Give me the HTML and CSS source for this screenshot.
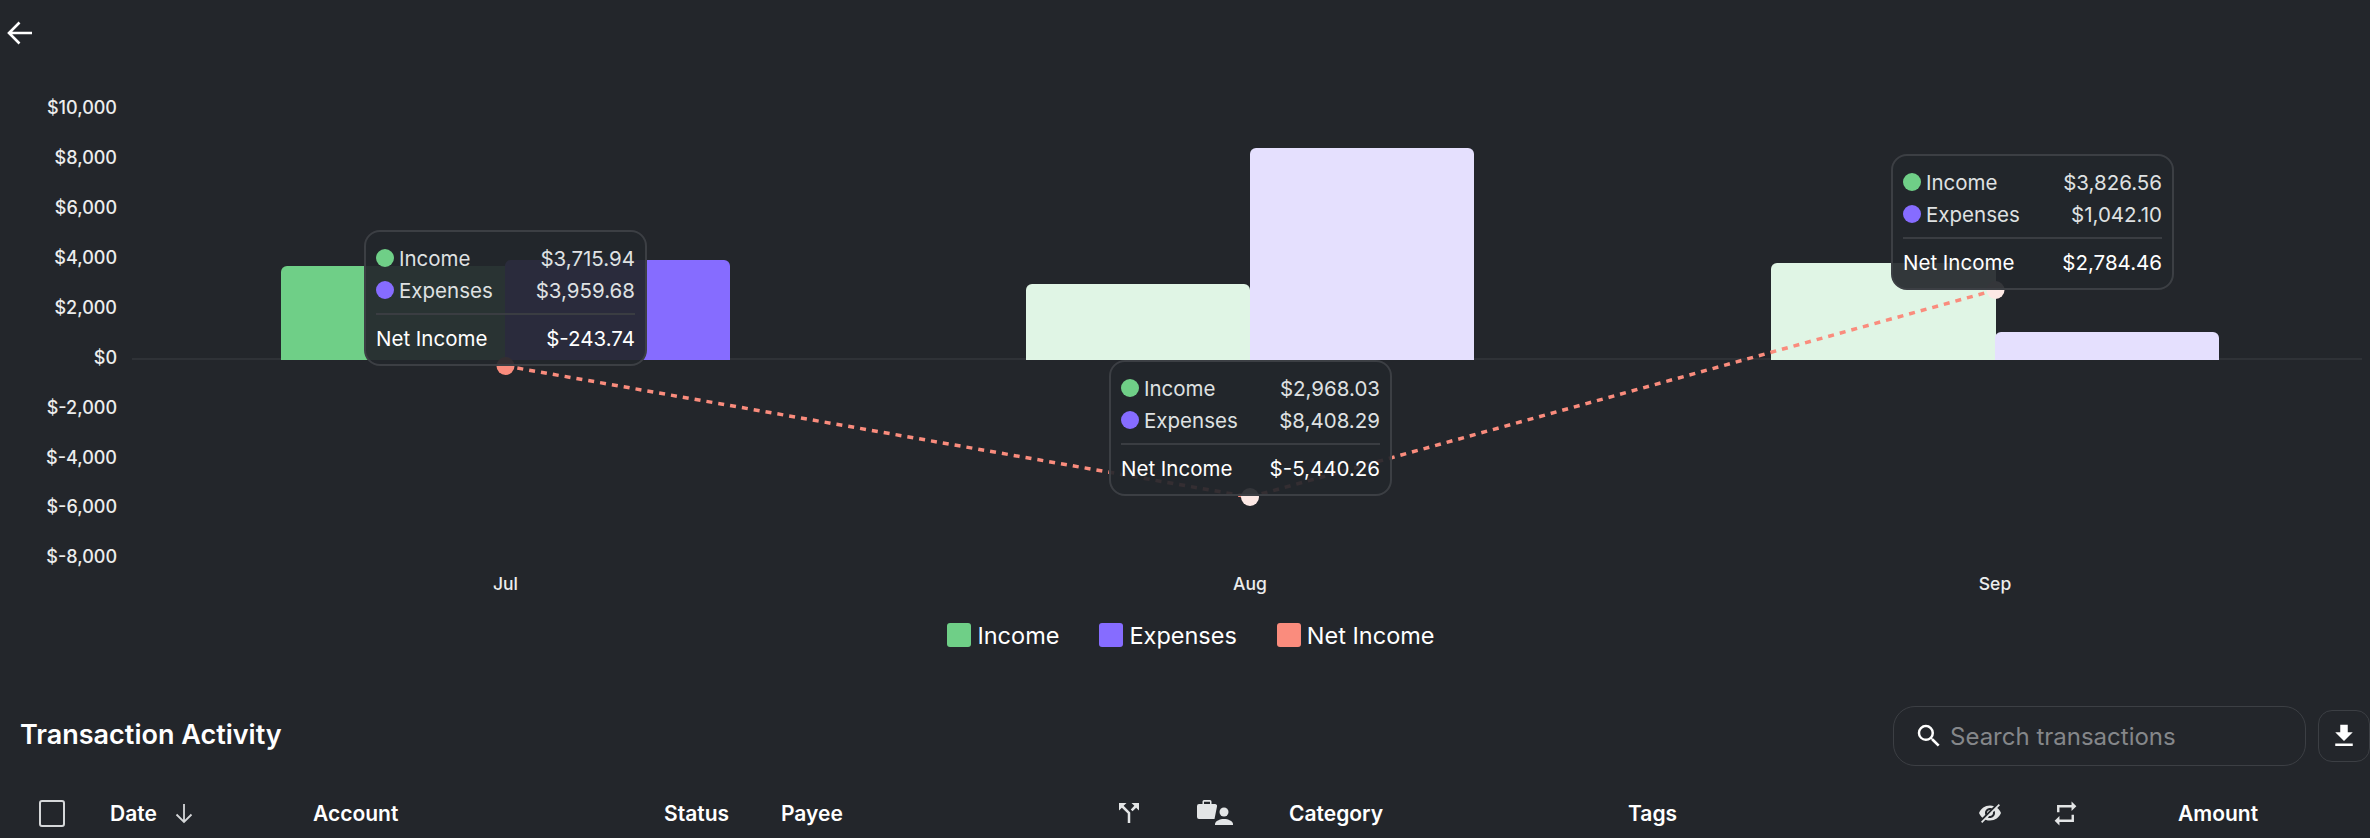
FILE: index.html
```html
<!DOCTYPE html>
<html lang="en">
<head>
    <meta charset="UTF-8">
    <title>Cash Flow</title>
    <link rel="stylesheet" href="styles.css">
</head>
<body>
<div class="topbar">
    <button class="back-btn">
        <svg width="26" height="26" viewBox="0 0 26 26"><path d="M25 13H2.500M12.500 2.500 2 13l10.500 10.500" fill="none" stroke="#fff" stroke-width="2.600"/></svg>
    </button>
</div>

<div class="chart">
    <svg class="chart-svg" width="2370" height="540" viewBox="0 66 2370 540">
        <g class="axis-y">
            <text x="117" y="114">$10,000</text>
            <text x="117" y="164">$8,000</text>
            <text x="117" y="214">$6,000</text>
            <text x="117" y="264">$4,000</text>
            <text x="117" y="314">$2,000</text>
            <text x="117" y="364">$0</text>
            <text x="117" y="414">$-2,000</text>
            <text x="117" y="464">$-4,000</text>
            <text x="117" y="513">$-6,000</text>
            <text x="117" y="563">$-8,000</text>
        </g>
        <line x1="132" y1="359" x2="2362" y2="359" stroke="#34373c" stroke-width="1.500"/>

        <path class="bar-income" d="M281 360V272a6 6 0 0 1 6-6H505V360Z"/>
        <path class="bar-expenses" d="M505 360V266a6 6 0 0 1 6-6H724a6 6 0 0 1 6 6V360Z"/>

        <path class="bar-income-dim" d="M1026 360V290a6 6 0 0 1 6-6H1244a6 6 0 0 1 6 6V360Z"/>
        <path class="bar-expenses-dim" d="M1250 360V154a6 6 0 0 1 6-6H1468a6 6 0 0 1 6 6V360Z"/>

        <path class="bar-income-dim" d="M1771 360V269a6 6 0 0 1 6-6H1990a6 6 0 0 1 6 6V360Z"/>
        <path class="bar-expenses-dim" d="M1995 360V338a6 6 0 0 1 6-6H2213a6 6 0 0 1 6 6V360Z"/>

        <polyline class="net-line" points="505.500,366 1250,497 1995.500,290"/>
        <circle cx="505.500" cy="366" r="9" fill="#fa8c7d"/>
        <circle cx="1250" cy="497" r="9" fill="#fde9e5"/>
        <circle cx="1995.500" cy="290" r="9" fill="#fde9e5"/>

        <g class="axis-x">
            <text x="505.500" y="590">Jul</text>
            <text x="1250" y="590">Aug</text>
            <text x="1995" y="590">Sep</text>
        </g>
    </svg>

    <div class="tooltip tip-jul">
        <div class="tip-row"><span class="tip-name"><i class="dot income"></i>Income</span><span>$3,715.94</span></div>
        <div class="tip-row"><span class="tip-name"><i class="dot expenses"></i>Expenses</span><span>$3,959.68</span></div>
        <div class="tip-line"></div>
        <div class="tip-row tip-total"><span>Net Income</span><span>$-243.74</span></div>
    </div>
    <div class="tooltip tip-aug">
        <div class="tip-row"><span class="tip-name"><i class="dot income"></i>Income</span><span>$2,968.03</span></div>
        <div class="tip-row"><span class="tip-name"><i class="dot expenses"></i>Expenses</span><span>$8,408.29</span></div>
        <div class="tip-line"></div>
        <div class="tip-row tip-total"><span>Net Income</span><span>$-5,440.26</span></div>
    </div>
    <div class="tooltip tip-sep">
        <div class="tip-row"><span class="tip-name"><i class="dot income"></i>Income</span><span>$3,826.56</span></div>
        <div class="tip-row"><span class="tip-name"><i class="dot expenses"></i>Expenses</span><span>$1,042.10</span></div>
        <div class="tip-line"></div>
        <div class="tip-row tip-total"><span>Net Income</span><span>$2,784.46</span></div>
    </div>
</div>

<div class="legend">
    <div class="legend-item"><i class="swatch income"></i>Income</div>
    <div class="legend-item"><i class="swatch expenses"></i>Expenses</div>
    <div class="legend-item"><i class="swatch net"></i>Net Income</div>
</div>

<div class="toolbar">
    <h2>Transaction Activity</h2>
    <div class="search-box">
        <svg width="30" height="30" viewBox="0 0 24 24"><path fill="#fff" d="M15.500 14h-.79l-.28-.27A6.471 6.471 0 0 0 16 9.500 6.500 6.500 0 1 0 9.500 16c1.610 0 3.090-.59 4.230-1.570l.27.28v.79l5 4.990L20.490 19l-4.990-5zm-6 0C7.010 14 5 11.990 5 9.500S7.010 5 9.500 5 14 7.010 14 9.500 11.990 14 9.500 14z"/></svg>
        <span class="placeholder">Search transactions</span>
    </div>
    <button class="download-btn">
        <svg width="30" height="30" viewBox="0 0 24 24"><path fill="#fff" d="M19 9h-4V3H9v6H5l7 7 7-7zM5 18v2h14v-2H5z"/></svg>
    </button>
</div>

<div class="table-head">
    <div><span class="checkbox"></span></div>
    <div class="sort-col">Date
        <svg width="22" height="24" viewBox="0 0 22 24"><path d="M11 3v18M3.500 13.500 11 21l7.500-7.500" fill="none" stroke="#d5d7d9" stroke-width="1.800"/></svg>
    </div>
    <div>Account</div>
    <div>Status</div>
    <div>Payee</div>
    <div><svg class="icon icon-split" width="30" height="30" viewBox="0 0 24 24" fill="#e3e5e6"><path d="M14 4l2.290 2.290-2.880 2.880 1.420 1.420 2.880-2.880L20 10V4zm-4 0H4v6l2.290-2.290 4.710 4.700V20h2v-8.410l-5.290-5.300z"/></svg></div>
    <div><svg class="icon" width="36" height="26" viewBox="0 0 36 26" fill="#e3e5e6"><path fill-rule="evenodd" d="M7 0h6a1.500 1.500 0 0 1 1.500 1.500V4H18a2 2 0 0 1 2 2.500L17.500 19H2a2 2 0 0 1-2-2V6a2 2 0 0 1 2-2h3.500V1.500A1.500 1.500 0 0 1 7 0zm0 1.700V4h6V1.700z"/><circle cx="27" cy="12" r="4.500"/><path d="M18 25v-1c0-3 5-5 9-5s9 2 9 5v1z"/></svg></div>
    <div>Category</div>
    <div>Tags</div>
    <div><svg class="icon icon-eye" width="24" height="24" viewBox="0 0 24 24" fill="#e3e5e6"><path d="M12 7c2.760 0 5 2.240 5 5 0 .65-.13 1.260-.36 1.830l2.920 2.920c1.510-1.260 2.700-2.890 3.430-4.750-1.730-4.390-6-7.500-11-7.500-1.400 0-2.740.25-3.980.7l2.160 2.160C10.740 7.130 11.350 7 12 7zM2 4.270l2.280 2.280.46.46C3.080 8.300 1.780 10.020 1 12c1.730 4.390 6 7.500 11 7.500 1.550 0 3.030-.3 4.380-.84l.42.42L19.730 22 21 20.730 3.270 3 2 4.270zM7.530 9.800l1.550 1.550c-.05.21-.08.43-.08.65 0 1.660 1.340 3 3 3 .22 0 .44-.03.65-.08l1.550 1.550c-.67.33-1.410.53-2.200.53-2.760 0-5-2.240-5-5 0-.79.2-1.530.53-2.200zm4.310-.78l3.150 3.150.02-.16c0-1.660-1.340-3-3-3l-.17.01z"/></svg></div>
    <div><svg class="icon icon-repeat" width="29" height="29" viewBox="0 0 24 24" fill="#e3e5e6"><path d="M7 7h10v3l4-4-4-4v3H5v6h2V7zm10 10H7v-3l-4 4 4 4v-3h12v-6h-2v4z"/></svg></div>
    <div>Amount</div>
</div>
</body>
</html>
```

FILE: styles.css
```css
body {
    margin: 0;
    height: 838px;
    overflow: hidden;
    background-color: #23262b;
    color: #fff;
    font-family: Inter, "Noto Sans", sans-serif;
}

button {
    padding: 0;
    background: none;
    border: none;
    cursor: pointer;
}

.topbar {
    height: 66px;
    padding: 20px 0 0 7px;
    box-sizing: border-box;
}

.back-btn {
    display: block;
    height: 26px;
}

.chart {
    position: relative;
    height: 540px;
}

.chart-svg {
    display: block;
}

.axis-y text {
    fill: #eceded;
    font-size: 18px;
    font-weight: 500;
    text-anchor: end;
}

.axis-x text {
    fill: #eceded;
    font-size: 17.500px;
    font-weight: 500;
    text-anchor: middle;
}

.bar-income { fill: #6fcf87; }
.bar-expenses { fill: #866cff; }
.bar-income-dim { fill: #e0f5e5; }
.bar-expenses-dim { fill: #e5e0fe; }

.net-line {
    fill: none;
    stroke: #fa8c7d;
    stroke-width: 3.500;
    stroke-dasharray: 6 6;
}

.tooltip {
    position: absolute;
    width: 283px;
    height: 136px;
    box-sizing: border-box;
    padding: 10px 10px 0;
    background-color: rgba(35, 38, 43, 0.92);
    border: 2px solid #3c3f44;
    border-radius: 16px;
    font-size: 20.500px;
    color: #dfe1e2;
}

.tip-jul { left: 364px; top: 164px; }
.tip-aug { left: 1109px; top: 294px; }
.tip-sep { left: 1891px; top: 88px; }

.tip-row {
    display: flex;
    justify-content: space-between;
    align-items: center;
    height: 32px;
}

.tip-name {
    display: flex;
    align-items: center;
}

.tip-total {
    color: #fff;
}

.tip-line {
    height: 2px;
    margin: 7px 0 7px;
    background-color: #3a3d42;
}

.dot {
    width: 18px;
    height: 18px;
    margin-right: 5px;
    border-radius: 50%;
}

.income { background-color: #6fcf87; }
.expenses { background-color: #866cff; }
.net { background-color: #fa8c7d; }

.legend {
    display: flex;
    justify-content: center;
    gap: 40px;
    height: 48px;
    padding: 17px 0 0 12px;
    box-sizing: border-box;
    font-size: 23.500px;
}

.legend-item {
    display: flex;
    align-items: center;
    height: 24px;
}

.swatch {
    width: 24px;
    height: 24px;
    margin-right: 6px;
    border-radius: 3px;
}

.toolbar {
    display: flex;
    align-items: center;
    height: 60px;
    margin-top: 52px;
    padding-left: 20px;
}

.toolbar h2 {
    flex: 1;
    margin: 0 0 4px;
    font-size: 27px;
    font-weight: 600;
}

.search-box {
    display: flex;
    align-items: center;
    gap: 6px;
    width: 413px;
    height: 60px;
    box-sizing: border-box;
    padding-left: 20px;
    border: 1.500px solid #3c3f44;
    border-radius: 22px;
}

.placeholder {
    color: #85878a;
    font-size: 24px;
}

.download-btn {
    display: flex;
    align-items: center;
    justify-content: center;
    width: 52px;
    height: 52px;
    margin-left: 12px;
    border: 1.500px solid #3c3f44;
    border-radius: 14px;
}

.table-head {
    display: grid;
    grid-template-columns: 71px 203px 351px 117px 338px 78px 92px 339px 351px 76px 123px auto;
    align-items: center;
    height: 28px;
    margin-top: 32px;
    padding-left: 39px;
    font-size: 21px;
    font-weight: 600;
}

.sort-col {
    display: flex;
    align-items: center;
    gap: 16px;
}

.checkbox {
    display: block;
    width: 22px;
    height: 23px;
    border: 2px solid #d5d7d9;
    border-radius: 3px;
}

.icon {
    display: block;
}

.icon-split {
    margin-left: -5px;
}

.icon-eye {
    margin-left: -1px;
    transform: scaleX(-1);
}

.icon-repeat {
    margin-left: -4px;
}
```
